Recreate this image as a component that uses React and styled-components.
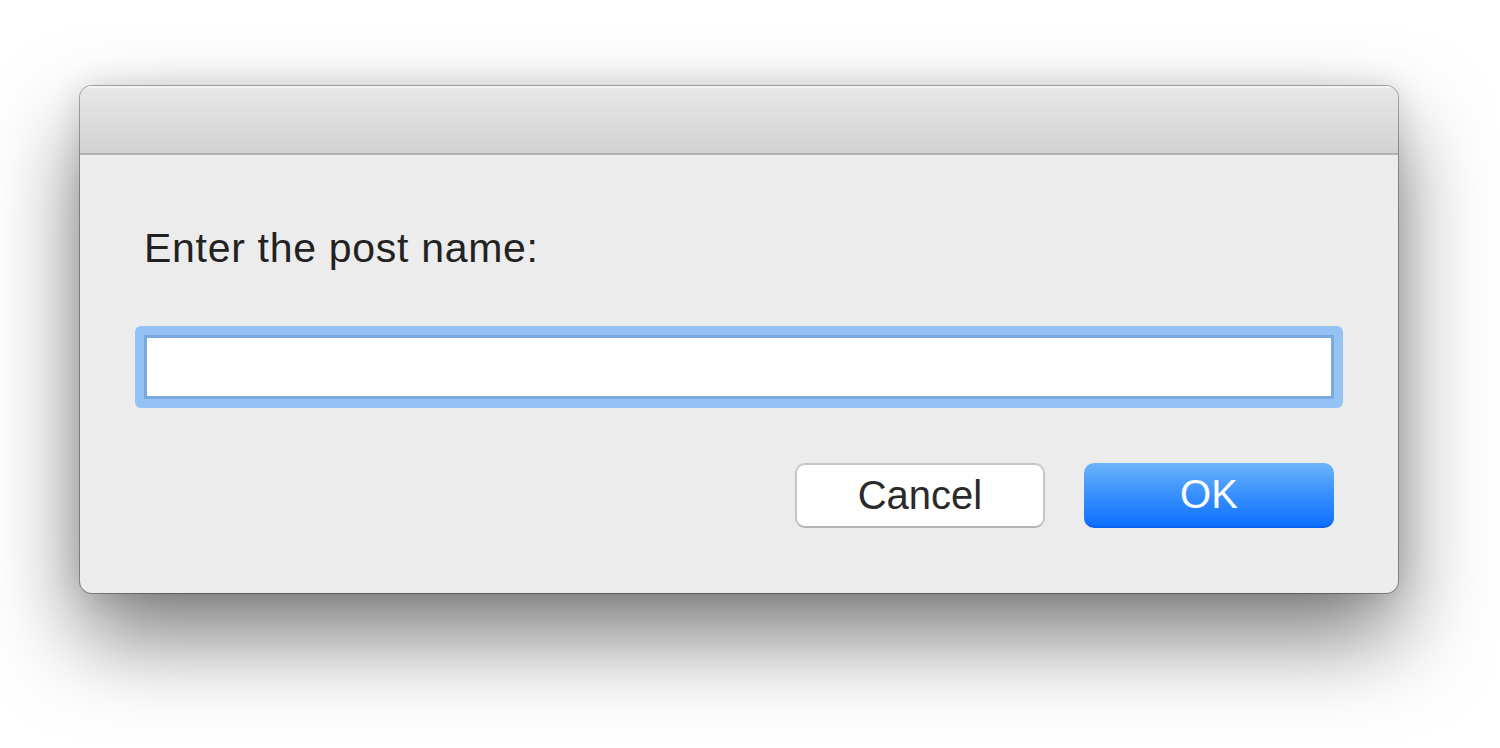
import React from 'react';
import styled, { createGlobalStyle } from 'styled-components';

const GlobalStyle = createGlobalStyle`
    html, body {
        margin: 0;
        padding: 0;
        background: #ffffff;
    }

    body {
        font-family: 'Liberation Sans', Arial, Helvetica, sans-serif;
    }
`;

const Desk = styled.div`
    width: 1500px;
    height: 748px;
    padding: 86px 0 0 80px;
    box-sizing: border-box;
    overflow: hidden;
`;

const DialogWindow = styled.div`
    width: 1318px;
    border-radius: 12px;
    background-color: #ececec;
    box-shadow: 0 0 0 1px rgba(0, 0, 0, 0.3),
        0 44px 90px rgba(0, 0, 0, 0.52),
        0 0 30px rgba(0, 0, 0, 0.12);
    overflow: hidden;
`;

const TitleBar = styled.div`
    height: 67px;
    background: linear-gradient(to bottom, #e9e8e9, #d3d2d3);
    border-bottom: 2px solid #b2b2b2;
    box-shadow: inset 0 2px 0 rgba(255, 255, 255, 0.55);
`;

const DialogBody = styled.div`
    display: flex;
    flex-direction: column;
    padding: 73px 64px 65px;
`;

const PromptLabel = styled.label`
    font-size: 41px;
    line-height: 40px;
    color: #222222;
    letter-spacing: 0.7px;
    margin-bottom: 58px;
`;

const FocusRing = styled.div`
    padding: 9px;
    margin: 0 -9px;
    border-radius: 6px;
    background-color: #95c2f5;
`;

const TextField = styled.input`
    display: block;
    width: 100%;
    height: 64px;
    box-sizing: border-box;
    border: 3px solid #7aa9df;
    background: #ffffff;
    font-family: inherit;
    font-size: 36px;
    padding: 0 10px;
    outline: none;
`;

const ButtonRow = styled.div`
    display: flex;
    justify-content: flex-end;
    gap: 39px;
    margin-top: 55px;
`;

const DialogButton = styled.button`
    width: 250px;
    height: 65px;
    box-sizing: border-box;
    border-radius: 10px;
    font-family: inherit;
    font-size: 40px;
    padding: 0;
    cursor: pointer;
    border: ${p => (p.$primary ? 'none' : '2px solid #c6c6c6')};
    border-bottom: ${p => (p.$primary ? '2px solid #0a62f0' : '2px solid #b3b3b3')};
    color: ${p => (p.$primary ? '#ffffff' : '#2a2a2a')};
    background: ${p => (p.$primary
        ? 'linear-gradient(to bottom, #6cb4fb 0%, #3d93fd 45%, #0d70ff 100%)'
        : '#ffffff')};
`;

function App() {
    return (
        <Desk>
            <GlobalStyle />
            <DialogWindow>
                <TitleBar />
                <DialogBody>
                    <PromptLabel htmlFor="post-name">Enter the post name:</PromptLabel>
                    <FocusRing>
                        <TextField id="post-name" type="text" />
                    </FocusRing>
                    <ButtonRow>
                        <DialogButton>Cancel</DialogButton>
                        <DialogButton $primary>OK</DialogButton>
                    </ButtonRow>
                </DialogBody>
            </DialogWindow>
        </Desk>
    );
}

export default App;
